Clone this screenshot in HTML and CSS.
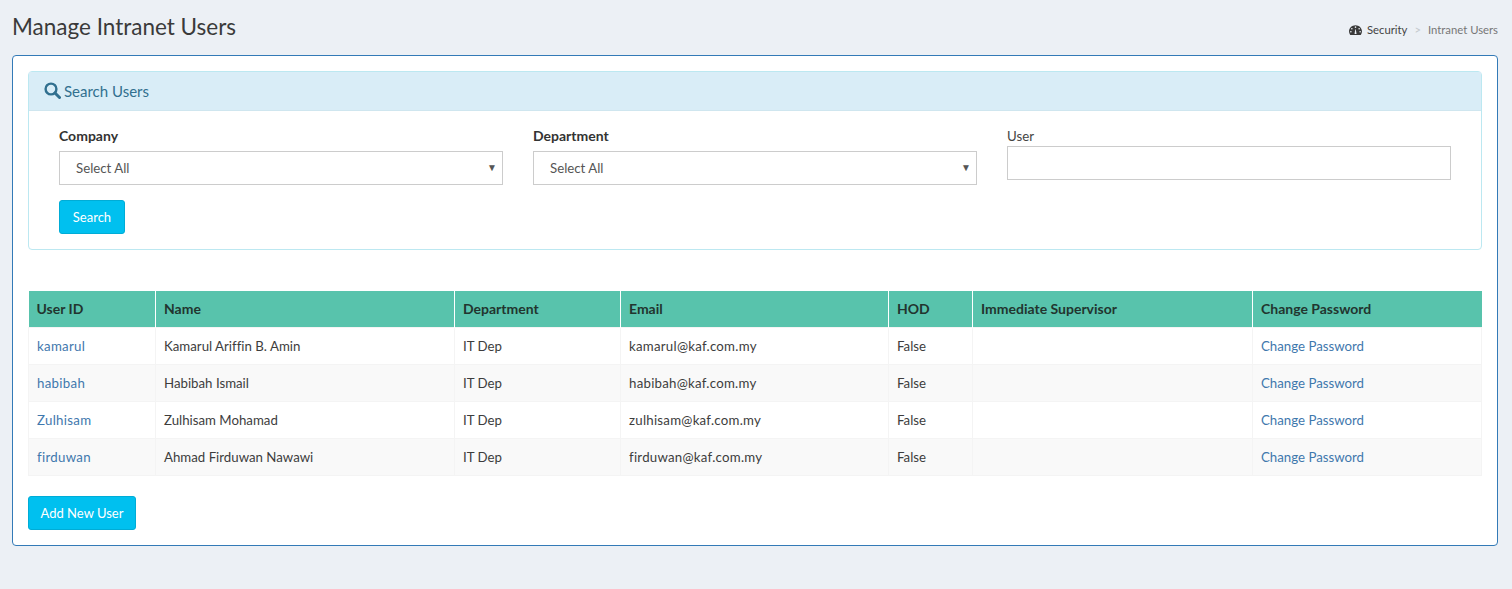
FILE: index.html
```html
<!DOCTYPE html>
<html lang="en">
<head>
  <meta charset="UTF-8">
  <title>Manage Intranet Users</title>
  <link rel="stylesheet" href="styles.css">
</head>
<body>
  <div class="page-head">
    <h1>Manage Intranet Users</h1>
    <div class="crumbs">
      <svg class="crumb-icon" viewBox="0 0 16 14" aria-hidden="true">
        <path fill="#3a3a3a" fill-rule="evenodd" d="M8 1C3.6 1 0 4.4 0 8.6c0 1.6.5 3 1.3 4.1.2.2.4.3.7.3h12c.3 0 .5-.1.7-.3.8-1.1 1.3-2.5 1.3-4.1C16 4.4 12.400 1 8 1zM8 2.500a1 1 0 1 1 0 2 1 1 0 0 1 0-2zM3.500 4.500a1 1 0 1 1 0 2 1 1 0 0 1 0-2zM2.300 8.200a1 1 0 1 1 0 2 1 1 0 0 1 0-2zM13.700 8.200a1 1 0 1 1 0 2 1 1 0 0 1 0-2zM12.500 4.500a1 1 0 1 1 0 2 1 1 0 0 1 0-2zM6.800 11.500l1-5.500h.5l1 5.500c-.4.4-2.100.4-2.500 0z"/>
      </svg>
      <span class="crumb-first">Security</span>
      <span class="crumb-sep">&gt;</span>
      <span class="crumb-last">Intranet Users</span>
    </div>
  </div>

  <div class="box">
    <div class="search-panel">
      <div class="search-head">
        <svg class="search-icon" viewBox="0 0 17 17" aria-hidden="true">
          <circle cx="7" cy="7" r="5.400" fill="none" stroke="#31708f" stroke-width="2.400"/>
          <path d="M11 11l4.500 4.500" fill="none" stroke="#31708f" stroke-width="3" stroke-linecap="round"/>
        </svg>
        <span class="search-title">Search Users</span>
      </div>
      <div class="search-body">
        <div class="fields">
          <div class="field">
            <label class="label-strong">Company</label>
            <div class="fake-select">Select All<span class="caret">▼</span></div>
          </div>
          <div class="field">
            <label class="label-strong">Department</label>
            <div class="fake-select">Select All<span class="caret">▼</span></div>
          </div>
          <div class="field">
            <label class="label-plain">User</label>
            <input type="text" class="text-input">
          </div>
        </div>
        <button type="button" class="btn btn-search">Search</button>
      </div>
    </div>

    <table class="users">
      <thead>
        <tr>
          <th class="c-id">User ID</th>
          <th class="c-name">Name</th>
          <th class="c-dept">Department</th>
          <th class="c-email">Email</th>
          <th class="c-hod">HOD</th>
          <th class="c-sup">Immediate Supervisor</th>
          <th>Change Password</th>
        </tr>
      </thead>
      <tbody>
        <tr>
          <td class="cell-id"><a href="#">kamarul</a></td>
          <td>Kamarul Ariffin B. Amin</td>
          <td>IT Dep</td>
          <td class="cell-email">kamarul@kaf.com.my</td>
          <td>False</td>
          <td></td>
          <td><a href="#">Change Password</a></td>
        </tr>
        <tr>
          <td class="cell-id"><a href="#">habibah</a></td>
          <td>Habibah Ismail</td>
          <td>IT Dep</td>
          <td class="cell-email">habibah@kaf.com.my</td>
          <td>False</td>
          <td></td>
          <td><a href="#">Change Password</a></td>
        </tr>
        <tr>
          <td class="cell-id"><a href="#">Zulhisam</a></td>
          <td>Zulhisam Mohamad</td>
          <td>IT Dep</td>
          <td class="cell-email">zulhisam@kaf.com.my</td>
          <td>False</td>
          <td></td>
          <td><a href="#">Change Password</a></td>
        </tr>
        <tr>
          <td class="cell-id"><a href="#">firduwan</a></td>
          <td>Ahmad Firduwan Nawawi</td>
          <td>IT Dep</td>
          <td class="cell-email">firduwan@kaf.com.my</td>
          <td>False</td>
          <td></td>
          <td><a href="#">Change Password</a></td>
        </tr>
      </tbody>
    </table>

    <button type="button" class="btn btn-add">Add New User</button>
  </div>
</body>
</html>
```

FILE: styles.css
```css
* { box-sizing: border-box; }
body { margin: 0; padding: 0 14px 43px 12px; background: #ecf0f5; font-family: Lato, Arial, sans-serif; font-size: 13.250px; font-variant-ligatures: none; color: #333; }

.page-head { height: 55px; display: flex; justify-content: space-between; align-items: flex-start; }
h1 { margin: 13px 0 0; font-size: 22.500px; line-height: 27px; font-weight: 400; color: #3a3a3a; }
.crumbs { margin-top: 23px; display: flex; align-items: center; font-size: 11.300px; line-height: 14px; }
.crumb-icon { width: 13px; height: 12px; margin-right: 5px; }
.crumb-first { color: #444; }
.crumb-sep { color: #c4c8cc; margin: 0 7px; }
.crumb-last { color: #777; }

.box { background: #fff; border: 1px solid #337ab7; border-radius: 4px; padding: 15px; height: 491px; }

.search-panel { border: 1px solid #bce8f1; border-radius: 4px; height: 179px; }
.search-head { height: 39px; background: #d9edf7; border-bottom: 1px solid #cfe6ef; display: flex; align-items: center; padding-left: 15px; color: #31708f; font-size: 15px; }
.search-title { margin-top: -1px; }
.search-icon { width: 17px; height: 17px; margin-right: 3px; margin-top: -2px; }
.search-body { padding: 16px 30px 0; }
.fields { display: grid; grid-template-columns: repeat(3, 1fr); gap: 30px; height: 73px; }
.label-strong { display: block; font-size: 14px; font-weight: 700; line-height: 18px; margin-bottom: 6px; color: #333; }
.label-plain { display: block; line-height: 18px; margin-bottom: 1px; color: #444; }
.fake-select { position: relative; height: 34px; border: 1px solid #ccc; padding: 0 16px; line-height: 32px; color: #555; }
.caret { position: absolute; right: 5px; top: -1px; font-size: 10px; color: #555; }
.text-input { display: block; width: 100%; height: 34px; border: 1px solid #ccc; padding: 0 12px; background: #fff; }

.btn { display: block; height: 34px; background: #00c0ef; border: 1px solid #00acd6; border-radius: 3px; color: #fff; font-family: inherit; font-size: 13px; padding: 0; }
.btn-search { width: 66px; }
.btn-add { width: 108px; margin-top: 20px; }

.users { width: 100%; margin-top: 41px; border-collapse: collapse; table-layout: fixed; }
.users th { height: 36px; background: #58c3ac; color: #22352f; font-size: 14px; font-weight: 700; text-align: left; padding: 0 8px; border-left: 1px solid #fff; }
.users th:first-child { border-left: none; }
.users td { height: 37px; padding: 0 8px; border: 1px solid #f4f4f4; color: #3d3d3d; }
.users tbody tr:nth-child(even) td { background: #f9f9f9; }
.users a { color: #3f78ad; text-decoration: none; }
.cell-id { letter-spacing: 0.3px; }
.cell-email { letter-spacing: 0.25px; }
.c-id { width: 127px; }
.c-name { width: 299px; }
.c-dept { width: 166px; }
.c-email { width: 268px; }
.c-hod { width: 84px; }
.c-sup { width: 280px; }
```
